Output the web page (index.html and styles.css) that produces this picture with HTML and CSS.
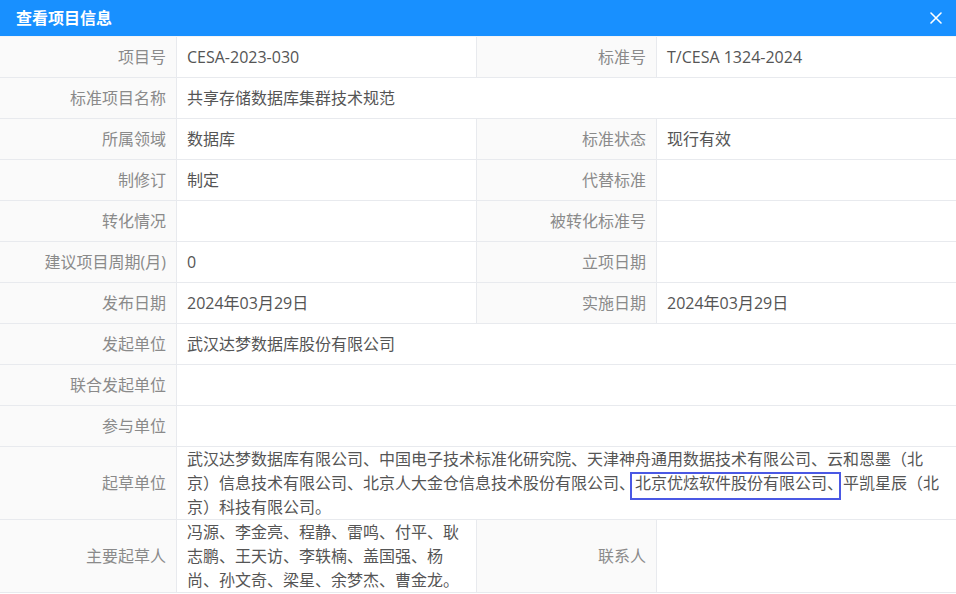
FILE: index.html
```html
<!DOCTYPE html>
<html lang="zh-CN">
<head>
<meta charset="utf-8">
<title>查看项目信息</title>
<link rel="stylesheet" href="styles.css">
</head>
<body>
<div class="dialog">
  <div class="dialog-header">
    <span class="dialog-title">查看项目信息</span>
    <span class="dialog-close" aria-label="关闭">
      <svg width="12" height="12" viewBox="0 0 12 12"><path d="M1 1L11 11M11 1L1 11" stroke="#fff" stroke-width="1.6" stroke-linecap="round"/></svg>
    </span>
  </div>
  <div class="info-grid">
    <div class="cell label">项目号</div>
    <div class="cell value">CESA-2023-030</div>
    <div class="cell label">标准号</div>
    <div class="cell value">T/CESA 1324-2024</div>

    <div class="cell label">标准项目名称</div>
    <div class="cell value span3">共享存储数据库集群技术规范</div>

    <div class="cell label">所属领域</div>
    <div class="cell value">数据库</div>
    <div class="cell label">标准状态</div>
    <div class="cell value">现行有效</div>

    <div class="cell label">制修订</div>
    <div class="cell value">制定</div>
    <div class="cell label">代替标准</div>
    <div class="cell value"></div>

    <div class="cell label">转化情况</div>
    <div class="cell value"></div>
    <div class="cell label">被转化标准号</div>
    <div class="cell value"></div>

    <div class="cell label">建议项目周期(月)</div>
    <div class="cell value">0</div>
    <div class="cell label">立项日期</div>
    <div class="cell value"></div>

    <div class="cell label">发布日期</div>
    <div class="cell value">2024年03月29日</div>
    <div class="cell label">实施日期</div>
    <div class="cell value">2024年03月29日</div>

    <div class="cell label">发起单位</div>
    <div class="cell value span3">武汉达梦数据库股份有限公司</div>

    <div class="cell label">联合发起单位</div>
    <div class="cell value span3"></div>

    <div class="cell label">参与单位</div>
    <div class="cell value span3"></div>

    <div class="cell label">起草单位</div>
    <div class="cell value span3"><p class="text">武汉达梦数据库有限公司、中国电子技术标准化研究院、天津神舟通用数据技术有限公司、云和恩墨（北京）信息技术有限公司、北京人大金仓信息技术股份有限公司、<span class="mark">北京优炫软件股份有限公司、</span>平凯星辰（北京）科技有限公司。</p></div>

    <div class="cell label">主要起草人</div>
    <div class="cell value"><p class="text">冯源、李金亮、程静、雷鸣、付平、耿志鹏、王天访、李轶楠、盖国强、杨尚、孙文奇、梁星、余梦杰、曹金龙。</p></div>
    <div class="cell label">联系人</div>
    <div class="cell value"></div>
  </div>
</div>
</body>
</html>
```

FILE: styles.css
```css
* { box-sizing: border-box; }

html, body {
  margin: 0;
  padding: 0;
  background: #ffffff;
}

body {
  font-family: "Open Sans", "Noto Sans CJK SC", sans-serif;
  font-size: 16px;
  width: 956px;
  height: 594px;
  overflow: hidden;
}

.dialog {
  width: 956px;
}

.dialog-header {
  height: 36px;
  background: #1890ff;
  display: flex;
  align-items: center;
  justify-content: space-between;
  padding: 0 14px 0 16px;
}

.dialog-title {
  color: #ffffff;
  font-size: 16px;
  font-weight: 700;
  line-height: 20px;
}

.dialog-close {
  display: flex;
  align-items: center;
  width: 12px;
  height: 12px;
}

.info-grid {
  display: grid;
  grid-template-columns: 176px 299px 179px 299px;
  gap: 1px;
  background: #e8eaee;
  border-top: 1px solid #f3f4f6;
  border-bottom: 1px solid #e8eaee;
}

.cell {
  min-height: 40px;
  display: flex;
  align-items: center;
  padding: 0 10px;
  line-height: 24px;
}

.label {
  background: #fafafa;
  color: #8a8a8a;
  justify-content: flex-end;
  text-align: right;
}

.value {
  background: #ffffff;
  color: #555555;
}

.span3 {
  grid-column: span 3;
}

.text {
  margin: 0;
  line-height: 24px;
}

.mark {
  position: relative;
}

.mark::after {
  content: "";
  position: absolute;
  left: -5px;
  right: 2px;
  top: 0;
  bottom: -6px;
  border: 2px solid #4a58e4;
  pointer-events: none;
}
```
